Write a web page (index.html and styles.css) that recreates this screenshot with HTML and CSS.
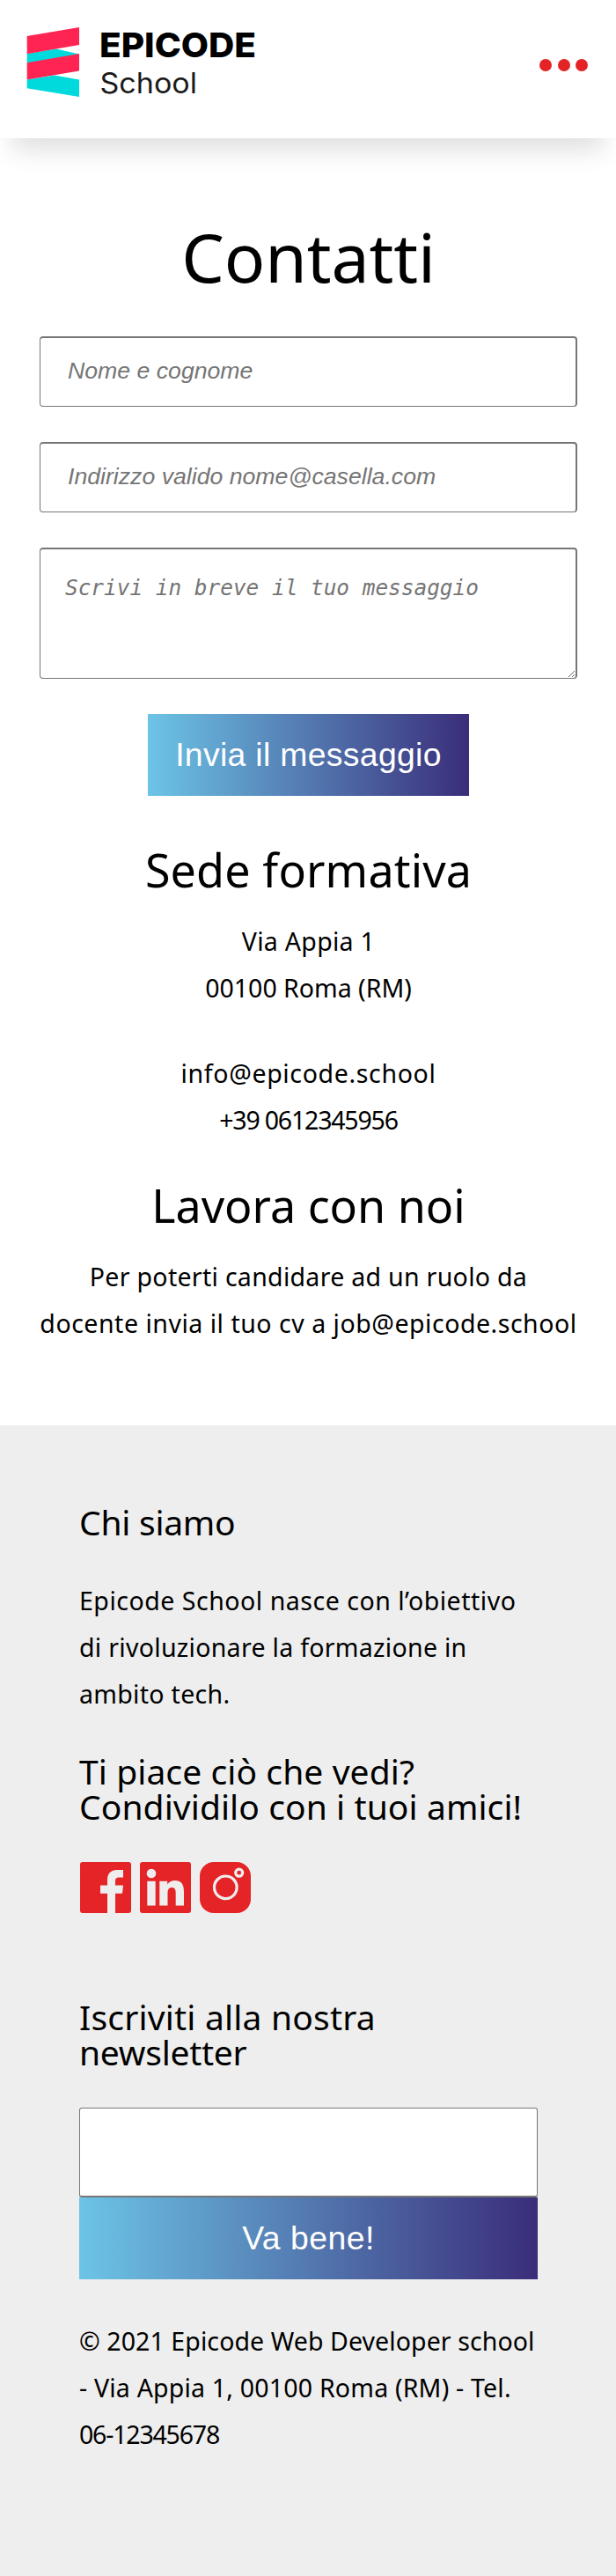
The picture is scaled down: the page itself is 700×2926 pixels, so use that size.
FILE: index.html
```
<!DOCTYPE html>
<html lang="it">
<head>
<meta charset="utf-8">
<title>Contatti - Epicode School</title>
<link rel="stylesheet" href="styles.css">
</head>
<body>
<header class="header">
  <svg class="logo" width="262" height="84" viewBox="30 28 262 84" role="img" aria-label="Epicode School">
    <path fill="#00dadd" d="M30.700 61L64 55.500L90 61.500L60 72L30.700 71.500ZM30.700 90.500L62 85.500L90 90.500V110L30.700 100.300Z"/>
    <path fill="#ff2452" d="M30.700 41L90 31V51L30.700 61.200ZM30.700 71.200L90 61V80.500L30.700 90.600Z"/>
    <text class="logo-name" x="113" y="64.500" textLength="178" lengthAdjust="spacingAndGlyphs">EPICODE</text>
    <text class="logo-sub" x="113.500" y="106" textLength="110.500" lengthAdjust="spacingAndGlyphs">School</text>
  </svg>
  <button class="menu" aria-label="Menu"><i class="dot"></i><i class="dot"></i><i class="dot"></i></button>
</header>
<main class="main">
  <h1 class="title">Contatti</h1>
  <form class="form">
    <input class="field" type="text" placeholder="Nome e cognome">
    <input class="field" type="text" placeholder="Indirizzo valido nome@casella.com">
    <textarea class="field message" placeholder="Scrivi in breve il tuo messaggio"></textarea>
    <button class="btn send" type="button">Invia il messaggio</button>
  </form>
  <section class="block">
    <h2 class="heading wide">Sede formativa</h2>
    <p class="text"><span class="line w3">Via Appia 1</span><span class="line">00100 Roma (RM)</span></p>
    <p class="text contacts"><span class="line w7">info@epicode.school</span><span class="line digits">+39 0612345956</span></p>
  </section>
  <section class="block jobs">
    <h2 class="heading">Lavora con noi</h2>
    <p class="text"><span class="line w3">Per poterti candidare ad un ruolo da</span><span class="line w5">docente invia il tuo cv a job@epicode.school</span></p>
  </section>
</main>
<footer class="footer">
  <h3 class="subheading tight">Chi siamo</h3>
  <p class="text about"><span class="line w5">Epicode School nasce con l’obiettivo</span><span class="line w3">di rivoluzionare la formazione in</span><span class="line w3">ambito tech.</span></p>
  <h3 class="subheading w1">Ti piace ciò che vedi?<br>Condividilo con i tuoi amici!</h3>
  <div class="social">
    <svg width="58" height="58" viewBox="0 0 58 58">
      <rect width="58" height="58" rx="3" fill="#e52427"/>
      <path fill="#eee" d="M31 58V35.700H23V26.500H31V20.500C31 13 35 9 42 9H49V17.600H44.500C41.300 17.600 40 19 40 21.500V26.500H49L48 35.700H40V58Z"/>
    </svg>
    <svg width="58" height="58" viewBox="0 0 58 58">
      <rect width="58" height="58" rx="3" fill="#e52427"/>
      <circle cx="13" cy="13" r="5.300" fill="#eee"/>
      <path fill="#eee" d="M8.300 21.700H17.700V49.500H8.300ZM22.300 21.700H31.200V25.500C33 22.500 36 21 40 21C47.500 21 50 26 50 34V49.500H40.700V35.500C40.700 31.500 39.700 29 36.300 29C32.800 29 31.500 31.500 31.500 35.500V49.500H22.300Z"/>
    </svg>
    <svg width="58" height="58" viewBox="0 0 58 58">
      <rect width="58" height="58" rx="16" fill="#e52427"/>
      <g fill="none" stroke="#eee" stroke-width="3.200">
        <circle cx="29.300" cy="28.800" r="12.800"/>
        <circle cx="44.700" cy="12.200" r="4"/>
      </g>
    </svg>
  </div>
  <h3 class="subheading news"><span class="line w2">Iscriviti alla nostra</span><span class="line tight">newsletter</span></h3>
  <form class="signup">
    <input class="email" type="text" aria-label="Email">
    <button class="btn ok" type="button">Va bene!</button>
  </form>
  <p class="text copy"><span class="line w1">© 2021 Epicode Web Developer school</span><span class="line w2">- Via Appia 1, 00100 Roma (RM) - Tel.</span><span class="line digits">06-12345678</span></p>
</footer>
</body>
</html>
```

FILE: styles.css
```
* { box-sizing: border-box; }

body {
  margin: 0;
  background: #fff;
  color: #000;
  font-family: "Noto Sans", sans-serif;
}

h1, h2, h3, p { margin: 0; font-weight: 400; }

.header {
  display: flex;
  justify-content: space-between;
  align-items: flex-start;
  height: 157px;
  padding: 28px 32px 0 30px;
  background: #fff;
  box-shadow: 0 27px 27px -14px rgba(0, 0, 0, .13);
}

.logo { display: block; }
.logo-name { font: 800 38.5px Inter, sans-serif; }
.logo-sub { font: 400 32px Inter, sans-serif; fill: #1b1b1b; }

.menu {
  display: flex;
  gap: 6.500px;
  margin-top: 39px;
  padding: 0;
  border: 0;
  background: none;
}

.dot {
  width: 14px;
  height: 14px;
  border-radius: 50%;
  background: #e42326;
}

.main {
  display: flow-root;
  height: 1462px;
  padding: 0 44px 0 45px;
  text-align: center;
}

.title {
  margin-top: 95px;
  font-size: 77px;
  line-height: 80px;
  letter-spacing: -.1px;
}

.form {
  display: flex;
  flex-direction: column;
  align-items: center;
  gap: 40px;
  margin-top: 50px;
}

.field {
  display: block;
  width: 100%;
  height: 80px;
  margin: 0;
  padding: 0 31px 3px;
  border: solid #767676;
  border-width: 2px 2px 1px 1px;
  border-radius: 4px;
  background: #fff;
  font: 26.67px "Liberation Sans", Arial, sans-serif;
}

.field::placeholder { color: #757575; font-style: italic; opacity: 1; }

.message {
  height: 149px;
  padding: 28px;
  font: 24.4px/32px "DejaVu Sans Mono", monospace;
  resize: both;
}

.btn {
  height: 93px;
  padding: 0;
  border: 0;
  background: linear-gradient(90deg, #6cc4e6, #3a2d7a);
  color: #fff;
  font: 37.33px "Liberation Sans", Arial, sans-serif;
}

.send { width: 365px; letter-spacing: .33px; }

.block { margin-top: 57px; }
.jobs { margin-top: 43px; }

.heading {
  margin-bottom: 28px;
  font-size: 52px;
  line-height: 54px;
}

.wide { letter-spacing: .15px; }

.text { font-size: 28.5px; line-height: 53px; }
.line { display: block; white-space: nowrap; }
.contacts { margin-top: 44px; }

/* Tracking steps for single lines */
.w1 { letter-spacing: .09px; }
.w2 { letter-spacing: .2px; }
.w3 { letter-spacing: .3px; }
.w5 { letter-spacing: .52px; }
.w7 { letter-spacing: .65px; }
.tight { letter-spacing: -.25px; }
.digits { letter-spacing: -1.2px; }

.footer {
  display: flow-root;
  height: 1307px;
  padding: 0 89px 0 90px;
  background: #eee;
}

.subheading {
  margin-top: 90px;
  font-size: 39px;
  line-height: 40px;
}

.about { margin-top: 43px; line-height: 52.8px; }
.about + .subheading { margin-top: 42px; }

.social {
  display: flex;
  gap: 10px;
  margin-top: 43px;
  padding-left: 1px;
}

.social svg { display: block; }
.news { margin-top: 98px; }

.signup {
  display: flex;
  flex-direction: column;
  margin-top: 43px;
}

.email {
  height: 102px;
  margin: 0;
  border: solid #767676;
  border-width: 1px 1px 2px 1px;
  border-radius: 3px;
  background: #fff;
}

.ok { letter-spacing: .5px; }
.copy { margin-top: 43.500px; }
```
